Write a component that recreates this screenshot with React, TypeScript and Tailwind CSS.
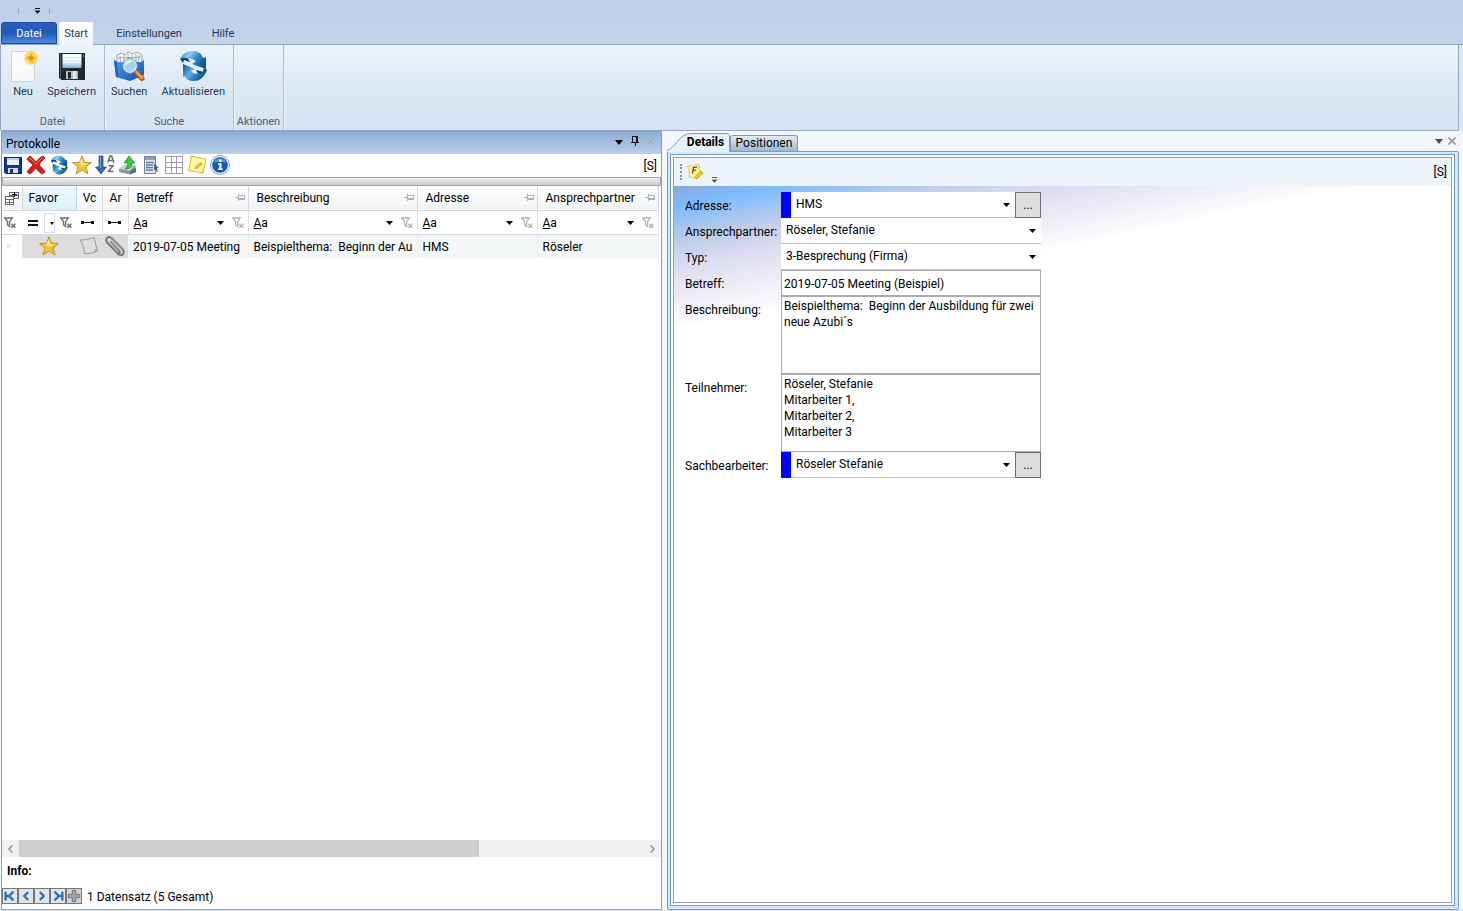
import type { ReactNode } from "react";

type IconProps = { className?: string };

/* ---------- small glyphs ---------- */

function Caret({ className = "h-[5px] w-2" }: IconProps) {
  return (
    <svg viewBox="0 0 8 5" preserveAspectRatio="none" className={`shrink-0 ${className}`}>
      <path d="M0 0H8L4 5Z" fill="currentColor" />
    </svg>
  );
}

function OverflowGlyph() {
  return (
    <svg viewBox="0 0 7 6" className="h-[6px] w-[7px] shrink-0">
      <path d="M1 0H6V1H1ZM0.5 2.5H6.5L3.5 5.8Z" fill="currentColor" />
    </svg>
  );
}

function CloseGlyph() {
  return (
    <svg viewBox="0 0 8 8" className="h-2 w-2 shrink-0" stroke="currentColor" strokeWidth="1.6">
      <path d="M0.5 0.5L7.5 7.5M7.5 0.5L0.5 7.5" />
    </svg>
  );
}

function PinGlyph() {
  return (
    <svg viewBox="0 0 8 10" className="h-[10px] w-2 shrink-0" shapeRendering="crispEdges">
      <path d="M1 0H7V6H8V7H4.5V10H3.5V7H0V6H1ZM2 1V6H5V1Z" fill="#111" fillRule="evenodd" />
    </svg>
  );
}

function HeaderPin() {
  return (
    <svg viewBox="0 0 10 7" className="h-[7px] w-[10px] shrink-0" fill="none" stroke="#a9b4bf" shapeRendering="crispEdges">
      <path d="M0 3.5H3M3.5 0V7M4 1.5H9.5V5.5H4M4 4.5H9" />
    </svg>
  );
}

function FilterClear({ faded = false }: { faded?: boolean }) {
  return (
    <svg viewBox="0 0 13 12" className="h-3 w-[13px] shrink-0" fill="none" stroke={faded ? "#b4b4b4" : "#6b6b6b"}>
      <path d="M0.7 1H8.3L5.6 4.6V9.5L3.6 8V4.6Z" strokeWidth="1.3" />
      <path d="M7.3 6.8L11.3 10.8M11.3 6.8L7.3 10.8" strokeWidth="1.5" />
    </svg>
  );
}

function RangeGlyph() {
  return (
    <svg viewBox="0 0 13 3" className="h-[3px] w-[13px] shrink-0" fill="#111" shapeRendering="crispEdges">
      <path d="M0 0H3V3H0ZM10 0H13V3H10ZM3 1H10V2H3Z" />
    </svg>
  );
}

function FieldChooser() {
  return (
    <svg viewBox="0 0 14 14" className="h-[14px] w-[14px]" fill="#fff" stroke="#666" shapeRendering="crispEdges">
      <path d="M4.5 1.5H13.5V7.5H4.5ZM4.5 4.5H13.5" />
      <path d="M0.5 5.5H8.5V13.5H0.5ZM0.5 8.5H8.5M0.5 11.5H8.5M4.5 8V13" />
      <path d="M7 3.5H12M9.5 1V6" stroke="#111" />
    </svg>
  );
}

/* ---------- ribbon icons ---------- */

function NewDocIcon() {
  return (
    <svg viewBox="0 0 32 32" className="h-8 w-8">
      <defs>
        <radialGradient id="sun">
          <stop offset="0" stopColor="#ff9d00" />
          <stop offset="0.6" stopColor="#ffc62e" />
          <stop offset="1" stopColor="#ffe08a" stopOpacity="0.4" />
        </radialGradient>
        <linearGradient id="sheet" x2="1" y2="1">
          <stop offset="0" stopColor="#fff" />
          <stop offset="1" stopColor="#f4f5f9" />
        </linearGradient>
      </defs>
      <path d="M4.5 1.5H27.5V31.5H4.5Z" fill="url(#sheet)" stroke="#cdd3e2" />
      <circle cx="24" cy="8" r="7.5" fill="url(#sun)" />
      <path d="M20.5 4.5L27.5 11.5M27.5 4.5L20.5 11.5" stroke="#ffe9a0" strokeWidth="1.2" />
      <circle cx="24" cy="8" r="2.4" fill="#f98a00" />
    </svg>
  );
}

function FloppyBlackIcon() {
  return (
    <svg viewBox="0 0 32 32" className="h-8 w-8">
      <defs>
        <linearGradient id="floppyLabel" x2="0" y2="1">
          <stop offset="0" stopColor="#fff" />
          <stop offset="0.6" stopColor="#e4f1fa" />
          <stop offset="1" stopColor="#6fb2e0" />
        </linearGradient>
      </defs>
      <path d="M3 3H29V30H5.5L3 27.5Z" fill="#24262b" />
      <path d="M4 4H5V27H4Z" fill="#555963" />
      <path d="M6.5 4H25.5V18H6.5Z" fill="url(#floppyLabel)" />
      <path d="M8 7.5H24M8 10.5H24M8 13.5H24" stroke="#d0dbe5" strokeWidth="0.6" />
      <path d="M10 21H22V29H10Z" fill="#b9bbc0" />
      <path d="M12 22H15V28.5H12Z" fill="#24262b" />
      <path d="M17 21H20V29H17Z" fill="#e6e7ea" />
      <path d="M27 5H28V7H27Z" fill="#9da1a8" />
    </svg>
  );
}

function SearchFolderIcon() {
  return (
    <svg viewBox="0 0 32 32" className="h-8 w-8">
      <defs>
        <linearGradient id="folder" x2="1" y2="1">
          <stop offset="0" stopColor="#4fa3ee" />
          <stop offset="1" stopColor="#0a4fae" />
        </linearGradient>
      </defs>
      <path d="M4 5L9 3L12 5L15 2L20 4L24 2L29 5V15H4Z" fill="#f4f5f7" stroke="#858d97" strokeWidth="0.8" />
      <path d="M7 6L8 14M11 5V13M15 4V12M19 5V12M23 4V12M26 5L25 13M5 8L28 7" stroke="#949aa2" strokeWidth="0.8" />
      <path d="M1 10L4 12H28L31 10V25L17 31L3 27Z" fill="url(#folder)" />
      <path d="M1 10L4 12L5 27L3 27Z" fill="#1763c4" />
      <path d="M23 22L29 28.5" stroke="#b84a15" strokeWidth="5" strokeLinecap="round" />
      <path d="M23.5 22L29 28" stroke="#ff9a4a" strokeWidth="2.6" strokeLinecap="round" />
      <circle cx="17" cy="16" r="6.5" fill="#a9d6f3" fillOpacity="0.95" stroke="#e0e8f0" strokeWidth="1.4" />
      <circle cx="17" cy="16" r="7.5" fill="none" stroke="#6d8298" strokeWidth="0.8" />
      <path d="M13 15A4.5 4.5 0 0 1 18 11.5" stroke="#fff" strokeWidth="1.5" fill="none" />
    </svg>
  );
}

function RefreshIcon({ className = "" }: IconProps) {
  return (
    <svg viewBox="0 0 32 32" className={className}>
      <defs>
        <linearGradient id="arrowTop" x2="1" y2="0.6">
          <stop offset="0" stopColor="#1a6cae" />
          <stop offset="0.35" stopColor="#8accf0" />
          <stop offset="0.65" stopColor="#2f86c4" />
          <stop offset="1" stopColor="#0f5590" />
        </linearGradient>
        <linearGradient id="arrowBottom" x2="1" y2="0.6">
          <stop offset="0" stopColor="#0f5590" />
          <stop offset="0.45" stopColor="#5fb0e0" />
          <stop offset="0.7" stopColor="#2b7fbd" />
          <stop offset="1" stopColor="#0d4f8a" />
        </linearGradient>
      </defs>
      <path d="M3 9C6 3 11 1 17 1C21 1 25 4 26 8L29 7V19L15 14L19 11.5C17 9 14 8 11 8.5L13 12L7 10L6 13Z" fill="url(#arrowTop)" />
      <path d="M3 9C7 7 9 7.5 11 8.5L13 12L7 10L6 13Z" fill="#0d4a80" />
      <path d="M30 20C27 28 22 31 17 31C12 31 9 29 8 26L6 27V14L18 19L14 21C16 23.5 18 24 21 23.5L19 20L26 22L27 18Z" fill="url(#arrowBottom)" />
      <path d="M30 20C27 23.500 24 24 21 23.500L19 20L26 22L27 18Z" fill="#0d4a80" />
    </svg>
  );
}

/* ---------- toolbar icons ---------- */

function FloppyBlueIcon() {
  return (
    <svg viewBox="0 0 20 20" className="h-5 w-5">
      <path d="M1 2H19V19H3L1 17Z" fill="#12398f" />
      <path d="M4 3H16V10H4Z" fill="#e9eef8" />
      <path d="M4 3H16V5H4Z" fill="#bccbe8" />
      <path d="M5 13H15V19H5Z" fill="#d5dbe8" />
      <path d="M7 14H10V18H7Z" fill="#12398f" />
      <path d="M1.5 2.5H18.5V18.5H3L1.5 17Z" fill="none" stroke="#0b2768" />
    </svg>
  );
}

function DeleteIcon() {
  return (
    <svg viewBox="0 0 20 20" className="h-5 w-5">
      <path d="M1 4L4 1C7 3 8 5 10 7C12 4 15 2 17 1L19 3C17 5 14 7 13 10C15 12 18 15 19 17L16 19C13 17 11 15 10 13C8 15 6 18 4 19L1 17C3 14 5 12 7 10C5 8 2 6 1 4Z" fill="#d9201a" stroke="#8f0f0c" strokeWidth="0.8" />
      <path d="M3 4L4 3L10 9L16 3" stroke="#f4766c" fill="none" />
    </svg>
  );
}

function StarIcon() {
  return (
    <svg viewBox="0 0 20 20" className="h-5 w-5">
      <path d="M10 0.8L12.4 7.2L19.4 7.6L13.9 11.9L16 19L10 15L4 19L6.1 11.9L0.6 7.6L7.6 7.2Z" fill="#f3c332" stroke="#b08a1e" strokeWidth="0.9" strokeLinejoin="round" />
      <path d="M10 3L11.5 8.2L16.5 8.5L10 11L7 8.5Z" fill="#fde58b" />
    </svg>
  );
}

function SortIcon() {
  return (
    <svg viewBox="0 0 20 20" className="h-5 w-5">
      <path d="M4 1H8V12H11.5L6 19L0.5 12H4Z" fill="#2b6db3" stroke="#174a84" strokeWidth="0.7" />
      <path d="M5 2H6V13H5Z" fill="#7fb1e3" />
      <path d="M13 7.5L15 1H16.5L19 7.5M14 5.5H18" fill="none" stroke="#5c6c78" strokeWidth="1.5" />
      <path d="M13.5 10.7H18L13.5 16.5H18.5" fill="none" stroke="#5c6c78" strokeWidth="1.5" />
    </svg>
  );
}

function ExportIcon() {
  return (
    <svg viewBox="0 0 20 20" className="h-5 w-5">
      <path d="M1 14L6 10H17L18 14V17L12 19.5L1 17Z" fill="#7f96a6" />
      <path d="M1 14L6 10H17L12 16Z" fill="#c3d0d9" />
      <path d="M12 16L18 13V17L12 19.5Z" fill="#566d7d" />
      <path d="M11 1L17 8H14C14 12 12 14 7 14C9 12 9.5 11 9.5 8H6Z" fill="#3cc43c" stroke="#1c8a22" strokeWidth="0.7" />
    </svg>
  );
}

function ListIcon() {
  return (
    <svg viewBox="0 0 20 20" className="h-5 w-5">
      <path d="M3.5 1.5H14.5V18.5H3.5Z" fill="#dfe8f2" stroke="#6b839d" />
      <path d="M4 2H14V5H4Z" fill="#8aa3c0" />
      <path d="M5 7.500H13M5 10H12M5 12.500H12M5 15H12" stroke="#5f7da0" strokeWidth="1.3" />
      <path d="M13 8.500L18 13L15.800 13.400L17 16.500L15.800 17L14.600 14L13 15.400Z" fill="#4a6480" />
    </svg>
  );
}

function GridIcon() {
  return (
    <svg viewBox="0 0 20 20" className="h-5 w-5" shapeRendering="crispEdges">
      <path d="M1.5 1.5H18.5V18.5H1.5Z" fill="#fff" />
      <path d="M1.5 1.5H18.5V18.5H1.5ZM7.5 1V19M12.5 1V19M1 7.5H19M1 12.5H19" fill="none" stroke="#9c9cae" />
    </svg>
  );
}

function NoteIcon() {
  return (
    <svg viewBox="0 0 20 20" className="h-5 w-5">
      <path d="M4 1L19 4L16 18L1 15.5C3 11 4 7 4 1Z" fill="#fff6a0" stroke="#d2bb45" />
      <path d="M14 18L16 18L17 14Z" fill="#c7ab35" />
      <path d="M8 14L9 11L14 7.5L15.5 9L10.5 13Z" fill="#f2c230" stroke="#b3953a" strokeWidth="0.6" />
    </svg>
  );
}

function InfoIcon() {
  return (
    <svg viewBox="0 0 20 20" className="h-5 w-5">
      <circle cx="10" cy="10" r="9.5" fill="#e9eef5" stroke="#7a8ba5" strokeWidth="0.8" />
      <circle cx="10" cy="10" r="7.8" fill="#1558b8" />
      <path d="M3.5 8A7 7 0 0 1 16.5 8C12 6 8 6 3.5 8Z" fill="#5b97e0" />
      <circle cx="10.3" cy="5.8" r="1.4" fill="#fff" />
      <path d="M8 8.3H11.5V13.5H12.7V15H8V13.5H9.2V9.8H8Z" fill="#fff" />
    </svg>
  );
}

function GreyNoteIcon() {
  return (
    <svg viewBox="0 0 20 20" className="h-5 w-5">
      <path d="M1 4C7 4 11 3 15 1.5L18.5 15C14 17 10 18 5.5 17.5C5 12 4 8 1 4Z" fill="#dedede" stroke="#9b9b9b" />
      <path d="M15 16L18.5 15L16.5 13Z" fill="#9b9b9b" />
    </svg>
  );
}

function ClipIcon() {
  return (
    <svg viewBox="0 0 20 20" className="h-5 w-5" fill="none" strokeLinecap="round">
      <path d="M6 6L14 14.5C16 16.5 14 18.5 12 16.5L2.5 7C-1 3 3.5 -1 7 2.5L17 12.5C21 17 17 21 13 18" stroke="#777" strokeWidth="1.9" />
      <path d="M6 6L14 14.5M7 2.5L17 12.5" stroke="#b5b5b5" strokeWidth="0.7" />
    </svg>
  );
}

function FavouriteNoteIcon() {
  return (
    <svg viewBox="0 0 18 18" className="h-[18px] w-[18px]">
      <path d="M1.5 3C5 3.5 9 2.5 13 1L14 7L17 10L10 16C7 15 5 14.5 3 14C3.5 9 3 6 1.5 3Z" fill="#fbf08a" stroke="#d3c268" strokeWidth="0.8" />
      <path d="M9 14L14.5 8L17 10.5L11 16Z" fill="#e9c53a" stroke="#a8923c" strokeWidth="0.6" />
      <path d="M6.5 10.5L7.5 4.5L11 4M7 7.5L10 7" fill="none" stroke="#3b3a1c" strokeWidth="1.1" />
    </svg>
  );
}

/* ---------- ribbon ---------- */

function RibbonButton({ label, children }: { label: string; children: ReactNode }) {
  return (
    <button type="button" className="flex flex-col items-center gap-[2px]">
      {children}
      <span className="leading-4">{label}</span>
    </button>
  );
}

function RibbonGroup({ title, className, children }: { title: string; className: string; children?: ReactNode }) {
  return (
    <div className={`flex flex-col justify-between border-r border-[#a9bdd8] pt-[5px] shadow-[1px_0_0_#eef4fb] ${className}`}>
      <div className="flex justify-between pr-2 pl-[6px]">{children}</div>
      <div className="text-center leading-4 text-[#48587a]">{title}</div>
    </div>
  );
}

function Ribbon() {
  return (
    <header className="text-[11px] text-[#1e395b]">
      <div className="flex h-[22px] items-center bg-[#bfd0e8] pl-[18px]">
        <span className="h-[6px] w-px bg-[#96a8c4]" />
        <button type="button" aria-label="Symbolleiste anpassen" className="mr-2 ml-[15px] text-black">
          <OverflowGlyph />
        </button>
        <span className="h-[6px] w-px bg-[#96a8c4]" />
      </div>
      <nav className="flex h-[23px] items-stretch border-b border-[#8ba6ca] bg-gradient-to-b from-[#bfd0e8] to-[#c3d4ea] pl-px">
        <button type="button" className="w-14 rounded-t-[3px] border border-[#1d4c9f] bg-gradient-to-b from-[#2a5fc0] via-[#2358b5] to-[#4d8be0] pt-[2px] text-white">
          Datei
        </button>
        <button type="button" className="-mb-px ml-[2px] w-[34px] rounded-t-[2px] bg-gradient-to-b from-white to-[#eef4fc] pt-px">
          Start
        </button>
        <button type="button" className="ml-4 w-20 pt-[2px]">Einstellungen</button>
        <button type="button" className="ml-[11px] w-[46px] pt-[2px]">Hilfe</button>
      </nav>
      <div className="mr-1 flex h-[86px] items-stretch rounded-b-[2px] border-x border-b border-[#94a9c6] bg-gradient-to-b from-[#ebf2fb] via-[#dde8f5] to-[#d6e3f2]">
        <RibbonGroup title="Datei" className="w-[104px]">
          <RibbonButton label="Neu">
            <NewDocIcon />
          </RibbonButton>
          <RibbonButton label="Speichern">
            <FloppyBlackIcon />
          </RibbonButton>
        </RibbonGroup>
        <RibbonGroup title="Suche" className="w-[129px]">
          <RibbonButton label="Suchen">
            <SearchFolderIcon />
          </RibbonButton>
          <RibbonButton label="Aktualisieren">
            <RefreshIcon className="h-8 w-8" />
          </RibbonButton>
        </RibbonGroup>
        <RibbonGroup title="Aktionen" className="w-[50px]" />
      </div>
    </header>
  );
}

/* ---------- record list ---------- */

const tools = [
  { label: "Speichern", icon: <FloppyBlueIcon /> },
  { label: "Löschen", icon: <DeleteIcon /> },
  { label: "Aktualisieren", icon: <RefreshIcon className="h-5 w-5" /> },
  { label: "Favorit", icon: <StarIcon /> },
  { label: "Sortieren", icon: <SortIcon /> },
  { label: "Exportieren", icon: <ExportIcon /> },
  { label: "Auswahl", icon: <ListIcon /> },
  { label: "Tabelle", icon: <GridIcon /> },
  { label: "Notiz", icon: <NoteIcon /> },
  { label: "Info", icon: <InfoIcon /> },
];

const textColumns = ["Betreff", "Beschreibung", "Adresse", "Ansprechpartner"];
const record = ["2019-07-05 Meeting", "Beispielthema:  Beginn der Au", "HMS", "Röseler"];

const navButtons = [
  { label: "Erster", d: "M3 3V13M12 3L7 8L12 13M4 8H7" },
  { label: "Zurück", d: "M10.5 3.5L6 8L10.5 12.5" },
  { label: "Weiter", d: "M5.5 3.5L10 8L5.5 12.5" },
  { label: "Letzter", d: "M13 3V13M4 3L9 8L4 13M9 8H12" },
];

function RecordTable() {
  return (
    <table className="w-[656px] table-fixed border-collapse">
      <colgroup>
        <col className="w-5" />
        <col className="w-[54px]" />
        <col className="w-[26px]" />
        <col className="w-[26px]" />
        <col className="w-[120px]" />
        <col className="w-[169px]" />
        <col className="w-[120px]" />
        <col className="w-[121px]" />
      </colgroup>
      <thead>
        <tr className="h-6 border-b border-[#d5d8dc] bg-gradient-to-b from-white to-[#f1f3f6] text-left">
          <th className="border-r border-[#d5d8dc] pl-[3px]" aria-label="Spaltenauswahl">
            <FieldChooser />
          </th>
          <th className="border-r border-[#b5d6ea] bg-gradient-to-b from-[#f2fafe] to-[#daeffb] pl-[6px] font-normal">Favor</th>
          <th className="border-r border-[#d5d8dc] pl-px text-center font-normal">Vc</th>
          <th className="border-r border-[#d5d8dc] pl-px text-center font-normal">Ar</th>
          {textColumns.map((name) => (
            <th key={name} className="border-r border-[#d5d8dc] pr-[3px] pl-2 font-normal">
              <div className="flex items-center justify-between">
                {name}
                <HeaderPin />
              </div>
            </th>
          ))}
        </tr>
        <tr className="h-6 border-b border-[#d5d8dc] text-left">
          <td className="pt-[2px] pl-[2px]">
            <FilterClear />
          </td>
          <td className="pt-[2px]">
            <div className="flex items-center justify-between pr-[3px] pl-[6px]">
              <svg viewBox="0 0 10 6" className="h-[6px] w-[10px]" fill="#111" shapeRendering="crispEdges">
                <path d="M0 0H10V2H0ZM0 4H10V6H0Z" />
              </svg>
              <span className="flex h-5 w-[11px] items-center justify-end border border-[#cfe0ee]">
                <Caret className="h-[3px] w-1" />
              </span>
              <FilterClear />
            </div>
          </td>
          <td className="border-r border-[#e2e4e7] pt-px pl-[5px]">
            <RangeGlyph />
          </td>
          <td className="border-r border-[#e2e4e7] pt-px pl-[5px]">
            <RangeGlyph />
          </td>
          {textColumns.map((name) => (
            <td key={name} className="border-r border-[#e2e4e7] pt-[2px] pr-[3px] pl-[5px]">
              <div className="flex items-center">
                <span>
                  <u>A</u>a
                </span>
                <input aria-label={`Filter ${name}`} className="h-5 w-0 min-w-0 flex-1 outline-none" />
                <Caret className="mr-2 h-1 w-[7px]" />
                <FilterClear faded />
              </div>
            </td>
          ))}
        </tr>
      </thead>
      <tbody>
        <tr className="h-6 bg-[#f3f7f7]">
          <td className="bg-white pl-[5px] text-[#e6e6e6]">
            <svg viewBox="0 0 4 6" className="h-[6px] w-1">
              <path d="M0 0L4 3L0 6Z" fill="currentColor" />
            </svg>
          </td>
          <td className="bg-[#dcdcdc]">
            <div className="flex justify-center">
              <StarIcon />
            </div>
          </td>
          <td className="bg-[#dcdcdc]">
            <div className="flex justify-center">
              <GreyNoteIcon />
            </div>
          </td>
          <td className="bg-[#dcdcdc]">
            <div className="flex justify-center">
              <ClipIcon />
            </div>
          </td>
          {record.map((value) => (
            <td key={value} className="overflow-hidden border-r border-[#e9eded] pt-px pl-[5px] whitespace-pre">
              {value}
            </td>
          ))}
        </tr>
      </tbody>
    </table>
  );
}

function ProtocolPanel() {
  return (
    <section className="flex flex-col border border-[#8d9db3] bg-white">
      <div className="flex h-[22px] items-center bg-gradient-to-b from-[#8faed6] to-[#b9cfea] pr-[6px] pl-1">
        <h2 className="flex-1 pt-[2px]">Protokolle</h2>
        <div className="-mt-[5px] flex items-center gap-2">
          <button type="button" aria-label="Fenstermenü" className="pt-1">
            <Caret />
          </button>
          <button type="button" aria-label="Anheften">
            <PinGlyph />
          </button>
          <button type="button" aria-label="Schließen" className="text-[#a3adba]">
            <CloseGlyph />
          </button>
        </div>
      </div>
      <div className="flex h-[23px] items-start gap-[3px] pt-px pr-1 pl-px">
        {tools.map((tool) => (
          <button key={tool.label} type="button" aria-label={tool.label}>
            {tool.icon}
          </button>
        ))}
        <span className="ml-auto self-center">[S]</span>
      </div>
      <div className="h-[9px] border border-[#a8a8a8] bg-gradient-to-b from-[#f2f2f2] to-[#cacaca]" />
      <div className="flex-1 overflow-hidden">
        <RecordTable />
      </div>
      <div className="flex h-[17px] items-center bg-[#f0f0f0]">
        <button type="button" aria-label="Nach links" className="flex w-[17px] justify-center">
          <svg viewBox="0 0 5 8" className="h-2 w-[5px]" fill="none" stroke="#8f8f8f" strokeWidth="1.4">
            <path d="M4.5 0.5L1 4L4.5 7.5" />
          </svg>
        </button>
        <div className="h-full flex-1">
          <div className="h-full w-[73.6%] bg-[#cdcdcd]" />
        </div>
        <button type="button" aria-label="Nach rechts" className="flex w-[17px] justify-center">
          <svg viewBox="0 0 5 8" className="h-2 w-[5px]" fill="none" stroke="#8f8f8f" strokeWidth="1.4">
            <path d="M0.5 0.5L4 4L0.5 7.5" />
          </svg>
        </button>
      </div>
      <div className="h-7 pl-[5px] leading-7 font-bold">Info:</div>
      <footer className="flex h-6 items-center pb-[2px]">
        {navButtons.map((button) => (
          <button key={button.label} type="button" aria-label={button.label} className="h-4 w-4 border border-[#777] bg-[#dde6ee]">
            <svg viewBox="0 0 16 16" className="h-full w-full" fill="none" stroke="#2f6fa5" strokeWidth="2.6">
              <path d={button.d} />
            </svg>
          </button>
        ))}
        <button type="button" aria-label="Neu" className="h-4 w-4 border border-[#777] bg-[#d4d4d4]">
          <svg viewBox="0 0 16 16" className="h-full w-full" fill="#a2a2a2" stroke="#6c6c6c">
            <path d="M6 1.5H10V6H14.5V10H10V14.5H6V10H1.5V6H6Z" />
          </svg>
        </button>
        <span className="pt-px pl-[5px]">1 Datensatz (5 Gesamt)</span>
      </footer>
    </section>
  );
}

/* ---------- details ---------- */

function Field({ id, label, tall = false, children }: { id: string; label: string; tall?: boolean; children: ReactNode }) {
  return (
    <div className={`flex ${tall ? "h-[78px]" : "h-[26px]"}`}>
      <label htmlFor={id} className="w-24 shrink-0 pt-[6px] leading-4 whitespace-nowrap">
        {label}
      </label>
      <div className="flex w-[260px]">{children}</div>
    </div>
  );
}

function Combo({ id, value, lookup = false }: { id: string; value: string; lookup?: boolean }) {
  return (
    <>
      {lookup && <span className="w-[10px] shrink-0 bg-[#0000ff]" />}
      <div className="relative flex-1 border-b border-[#c4c4c4] bg-white">
        <select id={id} className="h-[25px] w-full appearance-none pb-[2px] pl-[5px] outline-none">
          <option>{value}</option>
        </select>
        <Caret className="pointer-events-none absolute top-[11px] right-[5px] h-1 w-[7px]" />
      </div>
      {lookup && (
        <button type="button" aria-label="Auswählen" className="w-[26px] border border-[#707070] bg-[#dddddd] leading-4">
          ...
        </button>
      )}
    </>
  );
}

function TabStrip() {
  return (
    <div className="flex h-5 items-end" role="tablist">
      <button type="button" role="tab" aria-selected="true" className="relative h-[18px] w-[63px] pl-[14px] font-bold">
        <svg viewBox="0 0 63 19" className="absolute top-0 left-0 h-[19px] w-[63px]">
          <path d="M0 18.5C8 17 12 0.5 24 0.5H60Q62.5 0.5 62.5 3V19H0Z" fill="#e6f1fb" />
          <path d="M0 17.5C8 16 12 0.5 24 0.5H60Q62.5 0.5 62.5 3V18" fill="none" stroke="#7d9cbd" />
        </svg>
        <span className="relative leading-4">Details</span>
      </button>
      <button type="button" role="tab" aria-selected="false" className="h-4 w-[68px] rounded-t-[3px] border border-b-0 border-[#8395b0] bg-gradient-to-b from-[#e4ebf5] to-[#9fb5d2] leading-[15px]">
        Positionen
      </button>
      <div className="ml-auto flex items-center gap-[5px] self-center pr-[3px] text-[#4a4a4a]">
        <button type="button" aria-label="Tabmenü">
          <Caret />
        </button>
        <button type="button" aria-label="Tab schließen" className="text-[#999]">
          <CloseGlyph />
        </button>
      </div>
    </div>
  );
}

function DetailsPanel() {
  return (
    <section className="mr-1 ml-[5px] flex flex-col">
      <TabStrip />
      <div className="flex flex-1 flex-col rounded-[2px] border border-[#7a9dbe] bg-[#d7e9f9] p-[2px] pr-[3px] pb-[3px]">
        <div className="flex flex-1 flex-col border border-[#6f9cc4] bg-white p-[2px]">
          <div className="flex flex-1 flex-col border border-[#9aa0a6]">
            <div className="flex h-7 items-center bg-[#eef4fc] pr-1 pl-[6px]">
              <span className="h-4 border-l-2 border-dotted border-[#8a95a3]" />
              <button type="button" aria-label="Favoritennotiz" className="ml-1">
                <FavouriteNoteIcon />
              </button>
              <button type="button" aria-label="Weitere" className="mt-4 ml-[7px] text-[#555]">
                <OverflowGlyph />
              </button>
              <span className="ml-auto">[S]</span>
            </div>
            <form className="flex-1 bg-[linear-gradient(168deg,#8aa9da_0px,#7cbcff_22px,#b9cbe9_52px,#dcdcf1_80px,#ffffff_143px)] pt-[6px] pl-[11px]">
              <Field id="adresse" label="Adresse:">
                <Combo id="adresse" value="HMS" lookup />
              </Field>
              <Field id="ansprechpartner" label="Ansprechpartner:">
                <Combo id="ansprechpartner" value="Röseler, Stefanie" />
              </Field>
              <Field id="typ" label="Typ:">
                <Combo id="typ" value="3-Besprechung (Firma)" />
              </Field>
              <Field id="betreff" label="Betreff:">
                <input id="betreff" defaultValue="2019-07-05 Meeting (Beispiel)" className="w-full border border-[#ababad] bg-white px-[2px] pt-px outline-none" />
              </Field>
              <Field id="beschreibung" label="Beschreibung:" tall>
                <textarea
                  id="beschreibung"
                  defaultValue={"Beispielthema:  Beginn der Ausbildung für zwei neue Azubi´s"}
                  className="w-full resize-none overflow-hidden border border-[#ababad] bg-white px-[2px] pt-px leading-4 outline-none"
                />
              </Field>
              <Field id="teilnehmer" label="Teilnehmer:" tall>
                <textarea
                  id="teilnehmer"
                  defaultValue={"Röseler, Stefanie\nMitarbeiter 1,\nMitarbeiter 2,\nMitarbeiter 3"}
                  className="w-full resize-none overflow-hidden border border-[#ababad] bg-white px-[2px] pt-px leading-4 outline-none"
                />
              </Field>
              <Field id="sachbearbeiter" label="Sachbearbeiter:">
                <Combo id="sachbearbeiter" value="Röseler Stefanie" lookup />
              </Field>
            </form>
          </div>
        </div>
      </div>
    </section>
  );
}

export default function App() {
  return (
    <div className="flex min-h-screen flex-col bg-[#d9e6f5] pb-px font-['Roboto','Open_Sans',sans-serif] text-xs text-black">
      <Ribbon />
      <main className="grid flex-1 grid-cols-[661fr_801fr] bg-[#f3f7fd] pl-px">
        <ProtocolPanel />
        <DetailsPanel />
      </main>
    </div>
  );
}
